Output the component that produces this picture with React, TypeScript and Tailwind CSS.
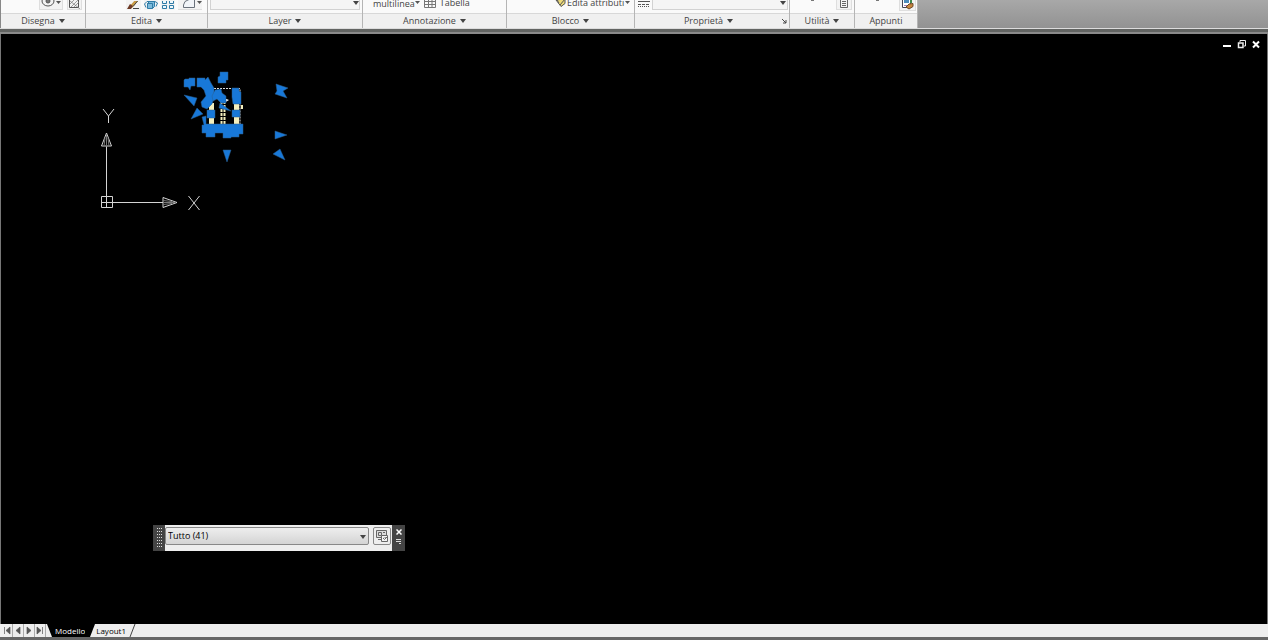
import type { ReactNode } from "react";

type Panel = {
  name: string;
  width: string;
  menu: boolean;
  launcher?: boolean;
  content: ReactNode;
};

function Caret({ className = "" }: { className?: string }) {
  return (
    <svg viewBox="0 0 6 4" className={`h-1 w-1.5 shrink-0 ${className}`} aria-hidden="true">
      <path d="M0 0h6L3 4z" fill="#444" />
    </svg>
  );
}

function TinyCaret() {
  return (
    <svg viewBox="0 0 5 3" className="mt-px h-[3px] w-[5px] shrink-0" aria-hidden="true">
      <path d="M0 0h5L2.5 3z" fill="#555" />
    </svg>
  );
}

const panels: Panel[] = [
  {
    name: "Disegna",
    width: "w-[85px]",
    menu: true,
    content: (
      <div className="flex gap-1 pl-[38px]">
        <button aria-label="Ellisse" className="flex h-[10px] items-start gap-px border-x border-b border-[#dedede] bg-[#f3f3f3] px-px">
          <svg viewBox="0 0 14 8" className="h-2 w-[14px]" fill="none" stroke="#555">
            <ellipse cx="7" cy="1" rx="6" ry="5" />
            <circle cx="7" cy="1" r="2" fill="#777" />
          </svg>
          <TinyCaret />
        </button>
        <button aria-label="Tratteggio" className="h-[10px] border-x border-b border-[#dedede] bg-[#f3f3f3]">
          <svg viewBox="0 0 13 9" className="h-[9px] w-[13px]" fill="none" stroke="#777">
            <path d="M1.500 0v7.500h9V0" stroke="#555" />
            <path d="M3 7l7-7M6 7l5-5M2 4l4-4M2 1l10 8" strokeWidth=".7" />
          </svg>
        </button>
      </div>
    ),
  },
  {
    name: "Edita",
    width: "w-[122px]",
    menu: true,
    content: (
      <div className="flex gap-[3px] pl-[40px]">
        <button aria-label="Cancella" className="bg-[#f3f3f3]">
          <svg viewBox="0 0 15 9" className="h-[9px] w-[15px]">
            <path d="M3 6L9-1h4L6 7z" fill="#c79a45" />
            <path d="M1 8l3-5 3 2-2 3z" fill="#6d3a26" />
            <path d="M7 7.500h6M7 5.500l5-6" stroke="#444" fill="none" />
          </svg>
        </button>
        <button aria-label="Esplodi" className="bg-[#f3f3f3]">
          <svg viewBox="0 0 14 9" className="h-[9px] w-[14px]" fill="#7dbbdc" stroke="#2f7ba6">
            <path d="M2 6.500L.5 3 3 .5h8L13.500 2 12 5.500" fill="none" />
            <path d="M3.500 7.500v-5h5v5zM3.500 2.500l2-2h5v5l-2 2" />
          </svg>
        </button>
        <button aria-label="Serie" className="bg-[#f3f3f3]">
          <svg viewBox="0 0 14 9" className="h-[9px] w-[14px]" fill="#edf7fc" stroke="#2f7ba6">
            <path d="M1.500-1.500h4v4h-4zM8.500-1.500h4v4h-4zM1.500 4.500h4v3h-4zM8.500 4.500h4v3h-4z" />
          </svg>
        </button>
        <button aria-label="Raccorda" className="flex h-[10px] gap-px border-b border-[#dedede] bg-[#f3f3f3] pl-1">
          <svg viewBox="0 0 14 9" className="h-[9px] w-[14px]" fill="#f1f4f8" stroke="#69717b">
            <path d="M1.500 7.500V5L3 1.500 7-.5h5.500v8z" />
          </svg>
          <TinyCaret />
        </button>
      </div>
    ),
  },
  {
    name: "Layer",
    width: "w-[155px]",
    menu: true,
    content: (
      <button aria-label="Elenco layer" className="ml-0.5 flex h-[10px] w-[150px] justify-end border-x border-b border-[#d2d2d2] bg-[#f5f5f5] pt-px">
        <Caret />
      </button>
    ),
  },
  {
    name: "Annotazione",
    width: "w-[144px]",
    menu: true,
    content: (
      <div className="flex items-start gap-1 pl-[10px]">
        <button className="flex leading-[8px]">
          multilinea <TinyCaret />
        </button>
        <button className="flex gap-1 leading-[5px]">
          <svg viewBox="0 0 12 8" className="h-2 w-3" fill="#fafafa" stroke="#777">
            <path d="M.5-1v8.500h11V-1M4.500-1v8M8-1v8M1 1.500h10M1 4.500h10" />
          </svg>
          Tabella
        </button>
      </div>
    ),
  },
  {
    name: "Blocco",
    width: "w-[128px]",
    menu: true,
    content: (
      <button className="ml-12 flex gap-px leading-[5px]">
        <svg viewBox="0 0 11 8" className="h-2 w-[11px]">
          <path d="M1 0l5 6.500 4-3V-1z" fill="#eedb79" stroke="#555" />
          <path d="M4 3L2 0M5 5l5-6" stroke="#555" />
        </svg>
        Edita attributi
        <TinyCaret />
      </button>
    ),
  },
  {
    name: "Proprietà",
    width: "w-[155px]",
    menu: true,
    launcher: true,
    content: (
      <div className="flex gap-0.5 pl-[3px]">
        <svg viewBox="0 0 12 8" className="h-2 w-3" fill="none" stroke="#555">
          <path d="M0 1.500h12" />
          <path d="M0 4.500h12" strokeDasharray="3 1" />
          <path d="M0 6.500h12" strokeDasharray="1 1" />
        </svg>
        <button aria-label="Tipo di linea" className="flex h-[10px] w-[136px] justify-end border-x border-b border-[#d2d2d2] bg-[#f5f5f5] pt-px pr-px">
          <Caret />
        </button>
      </div>
    ),
  },
  {
    name: "Utilità",
    width: "w-[65px]",
    menu: true,
    content: (
      <div className="flex gap-[22px] pl-[21px]">
        <span className="h-px w-[3px] bg-[#777]" />
        <button aria-label="Calcolatrice" className="border-x border-b border-[#dedede] bg-[#f3f3f3] px-0.5">
          <svg viewBox="0 0 10 9" className="h-[9px] w-[10px]" fill="#f4f4f4" stroke="#666">
            <path d="M1.500-1v8.500h7V-1M3 1.500h4M3 3.500h4M3 5.500h4" />
          </svg>
        </button>
      </div>
    ),
  },
  {
    name: "Appunti",
    width: "w-[63px]",
    menu: false,
    content: (
      <div className="flex gap-5 pl-[21px]">
        <span className="h-px w-[3px] bg-[#777]" />
        <button aria-label="Copia proprietà" className="border-x border-b border-[#dedede] bg-[#f3f3f3]">
          <svg viewBox="0 0 15 10" className="h-[10px] w-[15px]">
            <path d="M2.500 0v7.500h8V0" fill="#fff" stroke="#445" />
            <path d="M4 0h5v3H4z" fill="#4c8cbb" />
            <path d="M10 0h2v3h-2z" fill="#3f8a4d" />
            <path d="M4 5h3v1H4z" fill="#a77bb5" />
            <path d="M6 7l3-3 4-.5v3L9 9z" fill="#c8883f" stroke="#704b2b" />
          </svg>
        </button>
      </div>
    ),
  },
];

function RibbonPanel({ panel }: { panel: Panel }) {
  return (
    <section className={`${panel.width} flex shrink-0 flex-col border-r border-[#b5b5b5]`}>
      <div className="h-[13px] overflow-hidden bg-[#fafafa]">{panel.content}</div>
      <div className="flex h-[15px] items-center border-t border-[#d8d8d8] bg-[#f0f0f0]">
        <button className="flex grow items-center justify-center gap-1 leading-[14px]">
          {panel.name}
          {panel.menu && <Caret />}
        </button>
        {panel.launcher && (
          <button aria-label="Apri tavolozza" className="pr-0.5">
            <svg viewBox="0 0 5 5" className="size-[5px]" stroke="#444" fill="none">
              <path d="M0 0l4 4M4 1v3H1" />
            </svg>
          </button>
        )}
      </div>
    </section>
  );
}

function WindowControls() {
  return (
    <div className="flex items-center gap-[5px]">
      <button aria-label="Riduci a icona">
        <svg viewBox="0 0 10 9" className="h-[9px] w-[10px]">
          <path d="M1 5h8v2H1z" fill="#fff" />
        </svg>
      </button>
      <button aria-label="Ripristina">
        <svg viewBox="0 0 9 9" className="size-[9px]" fill="none" stroke="#eee">
          <path d="M3 2V.5h5.500V6H7" />
          <path d="M1.500 3h4.500v4.500H1.500z" strokeWidth="1.500" />
        </svg>
      </button>
      <button aria-label="Chiudi disegno">
        <svg viewBox="0 0 10 9" className="h-[9px] w-[10px]" stroke="#fff" strokeWidth="2">
          <path d="M2 1.500l6 6M8 1.500l-6 6" />
        </svg>
      </button>
    </div>
  );
}

function Drawing() {
  return (
    <svg viewBox="1 0 300 190" className="h-[190px] w-[300px]" role="img" aria-label="Oggetti selezionati e icona UCS">
      {/* UCS icon */}
      <g fill="none" stroke="#d4d4d4">
        <path d="M106.500 162V112.500M113 168.500h50M101.500 162.500h11v11h-11zM106.500 162v12M101 168.500h12" />
        <path d="M106.500 99l5 13h-10zM177 168.500l-14-5v10z" />
        <path d="M105 104l-1 8M108 104l1 8M106.500 101v11M163 166.500l9 1M163 170.500l9-1M163 168.500h13" stroke="#777" />
        <path d="M103 75l5.500 7 5.500-7M108.500 82v7M188.500 162l11 14M199.500 162l-11 14" />
      </g>

      {/* linework under the grips */}
      <g fill="#f4efbe">
        <path d="M209 69h5v22h-5zM234 69h5v22h-5zM241 71h2v4h-2z" />
        <path d="M224 64l5 2-5 3z" fill="#fff" />
      </g>
      <g fill="none" stroke="#ddd">
        <path d="M211 54.500h29v40" strokeDasharray="2 1" />
        <path d="M221.500 63v28M224.500 63v28" stroke="#f4efbe" strokeWidth="2" strokeDasharray="3 1" />
      </g>

      {/* grips */}
      <g fill="#1878d8" stroke="#2b5f8e" strokeWidth=".5">
        <path d="M185 45h4v-1h6v8h-4l-1 4-2-3h-4v-7zM197 44h8v2l3-3 3 6 3 5v10l-2 6-5 5-5-2-1-5 5-6-2-6-3-3h-4z" />
        <path d="M220 42v-4h8v8h-2v3h-8v-6zM215 56l6-1 1 4 4 3v7h-5l-4-4-4 2-1-5zM232 54h7v3l2 1v12h-8l-1-7z" />
        <path d="M207 76h8v8h-8zM232 76h8v7h-8zM202 83l4-1v8h37v10h-4v3h-8v1h-8v-5h-8v4h-9v-4h-4v-8h2z" />
        <path d="M184 61l13 3-3 8zM197 74l6 6-12 5zM220 69l11 8-12-3zM223 116h8l-4 12z" />
        <path d="M276 50l12 4-5 3 4 7-12-4 2-3zM275 97l12 4-12 4zM273 120l7-5 5 11z" />
      </g>
    </svg>
  );
}

function SelectionPalette() {
  return (
    <div className="absolute top-[491px] left-[152px] flex h-[26px] w-[252px] bg-[#444]">
      <div className="flex w-3 items-center justify-center">
        <svg viewBox="0 0 7 22" className="h-[22px] w-[7px]" fill="none" stroke="#ddd" strokeDasharray="1 2">
          <path d="M1.500 1v20M3.500 1v20M5.500 1v20" />
        </svg>
      </div>
      <div className="flex grow items-start gap-1 bg-[#eeeeee] pt-0.5 pr-px">
        <div className="relative grow">
          <select
            aria-label="Tipo di oggetto"
            className="h-[18px] w-full appearance-none rounded-xs border border-[#888] bg-linear-to-b from-[#eeeeee] to-[#d4d4d4] pl-0.5 leading-4 text-black"
          >
            <option>Tutto (41)</option>
          </select>
          <Caret className="pointer-events-none absolute top-2 right-[3px]" />
        </div>
        <button aria-label="Selezione rapida" className="flex size-[18px] items-center justify-center rounded-xs border border-[#888]">
          <svg viewBox="0 0 14 14" className="size-[14px]" fill="#ddd" stroke="#666">
            <path d="M1.500 1.500h10v7h-10zM3.500 3.500h3v3h-3zM8 3.500h2M3 10.500h3" />
            <path d="M6.500 6.500h6v6h-6zM8 9l1.500 1.500L12 8" fill="#f4f4f4" />
          </svg>
        </button>
      </div>
      <div className="flex w-[13px] flex-col items-center gap-1 pt-1">
        <button aria-label="Chiudi">
          <svg viewBox="0 0 6 6" className="size-1.5" stroke="#fff" strokeWidth="1.500">
            <path d="M.5.5l5 5M5.500.5l-5 5" />
          </svg>
        </button>
        <button aria-label="Opzioni">
          <svg viewBox="0 0 6 6" className="size-1.5" fill="none" stroke="#ddd">
            <path d="M0 .5h5M0 2.500h5M3 4.500h2" />
          </svg>
        </button>
      </div>
    </div>
  );
}

const tabArrows = [
  { label: "Prima scheda", d: "M2.500 1v7M8 1v7L4 4.500z" },
  { label: "Scheda precedente", d: "M7 1v7L3 4.500z" },
  { label: "Scheda successiva", d: "M3 1v7l4-3.500z" },
  { label: "Ultima scheda", d: "M2 1v7l4-3.500zM7.500 1v7" },
];

function LayoutTabs() {
  return (
    <nav className="flex h-[13px] shrink-0 items-stretch overflow-hidden bg-[#eeeeee] text-[8px] leading-[13px] text-black">
      <div className="flex pl-0.5">
        {tabArrows.map((arrow) => (
          <button key={arrow.label} aria-label={arrow.label} className="flex w-[11px] items-center justify-center border-r border-[#aaa]">
            <svg viewBox="0 0 10 9" className="h-[9px] w-[10px]" fill="#555">
              <path d={arrow.d} stroke="#555" strokeWidth=".7" />
            </svg>
          </button>
        ))}
      </div>
      <svg viewBox="0 0 9 13" className="h-[13px] w-[9px]">
        <path d="M1 0l5 13h3V0z" fill="#000" />
      </svg>
      <button className="bg-black text-white">Modello</button>
      <svg viewBox="0 0 11 13" className="h-[13px] w-[11px]">
        <path d="M0 0h10L5 13H0z" fill="#000" />
      </svg>
      <button>Layout1</button>
      <svg viewBox="0 0 10 13" className="h-[13px] w-[10px]">
        <path d="M9 0L4 13" stroke="#444" />
      </svg>
    </nav>
  );
}

export default function App() {
  return (
    <div className="flex h-screen flex-col overflow-hidden bg-[#666] font-['Open_Sans','Noto_Sans',sans-serif] text-[9px] text-[#444]">
      <header className="flex h-7 shrink-0 bg-linear-to-b from-[#a8a8a8] to-[#929292]">
        <div className="flex border-l border-[#888]">
          {panels.map((panel) => (
            <RibbonPanel key={panel.name} panel={panel} />
          ))}
        </div>
      </header>
      <div className="h-1.5 shrink-0 border-t border-b-2 border-t-[#dcdcdc] border-b-[#8a8a8a] bg-[#626462]" />
      <main className="relative min-h-0 grow border-x border-[#777] bg-black">
        <div className="absolute top-1.5 right-1.5">
          <WindowControls />
        </div>
        <Drawing />
        <SelectionPalette />
      </main>
      <LayoutTabs />
      <div className="h-[3px] shrink-0 bg-[#666]" />
    </div>
  );
}
